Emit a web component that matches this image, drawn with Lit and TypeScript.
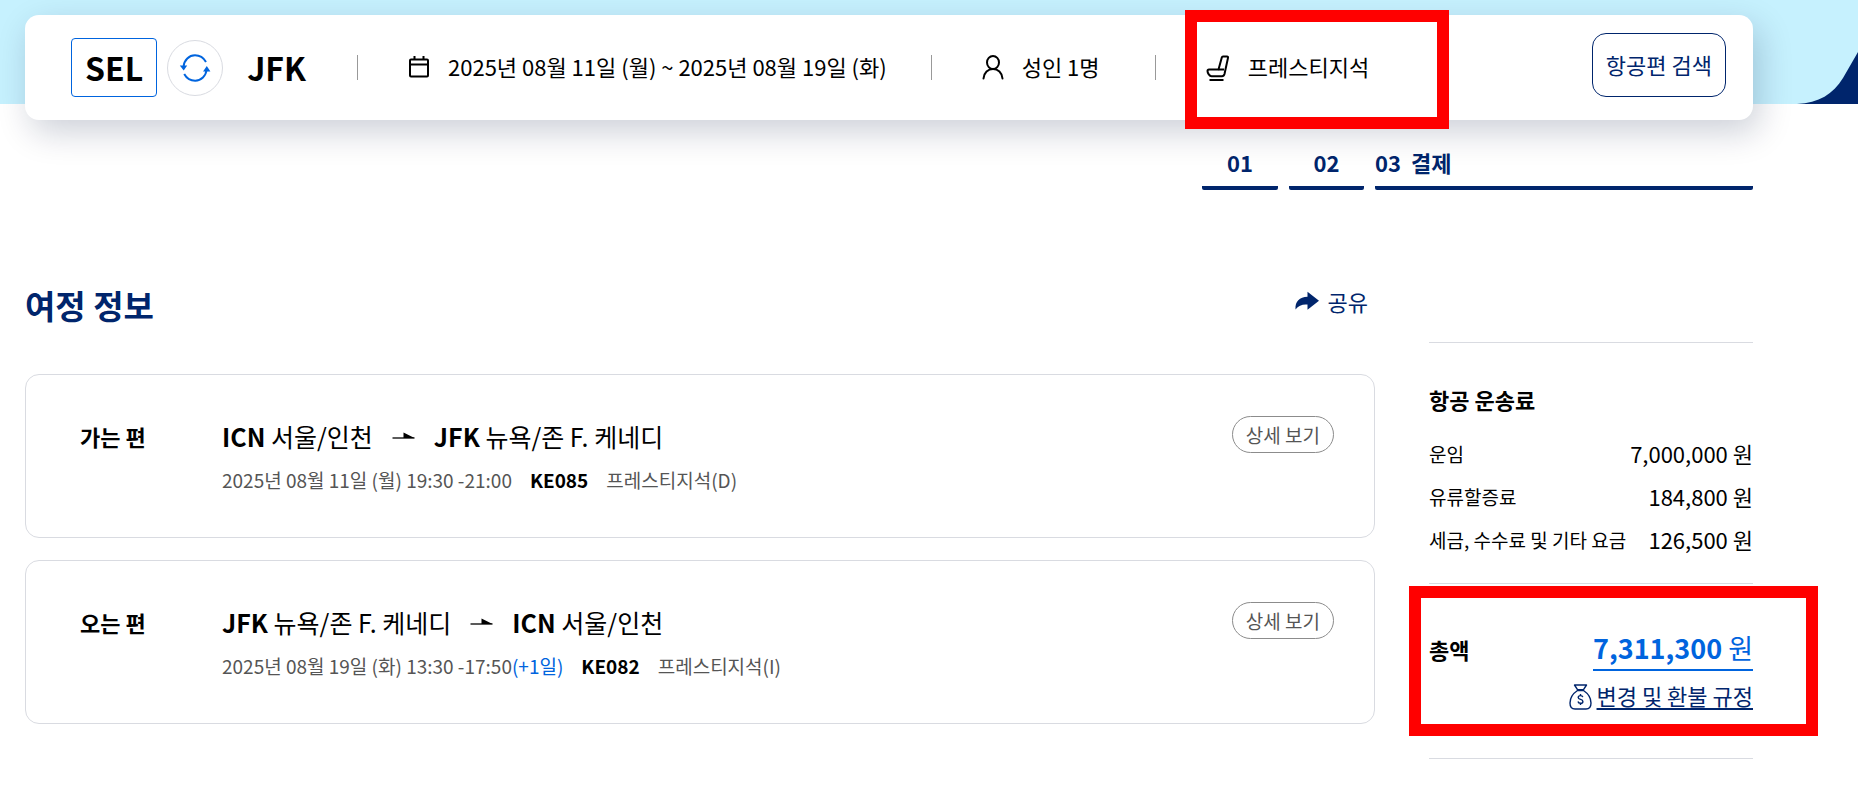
import { LitElement, html, css, nothing } from "lit";
import { customElement, property } from "lit/decorators.js";

const shared = css`
  * {
    box-sizing: border-box;
  }
  h2,
  h3,
  p,
  dl,
  dd,
  dt,
  ol {
    margin: 0;
    padding: 0;
  }
  button {
    font: inherit;
    color: inherit;
    background: none;
    border: 0;
    padding: 0;
    cursor: pointer;
    white-space: nowrap;
  }
  svg {
    display: block;
    flex: none;
  }
`;

const icons = {
  swap: html`<svg width="32" height="28" viewBox="0 0 32 28" fill="none" stroke="#0064de" stroke-width="2">
    <path d="M4.6 12.5C5.2 6 10 1.3 16 1.3c4.600 0 8.600 2.500 11 6.700" />
    <path d="M27.600 15.500C27 22 22.200 26.700 16.200 26.700c-4.700 0-8.700-2.600-11-6.700" />
    <path d="M.8 11.500h7.400l-3.500 5z" fill="#0064de" stroke="none" />
    <path d="M24 17.500h7.400l-3.600-5.500z" fill="#0064de" stroke="none" />
  </svg>`,
  calendar: html`<svg width="22" height="24" viewBox="0 0 22 24" fill="none" stroke="#000" stroke-width="2">
    <rect x="2" y="3.500" width="18" height="17" rx="1" />
    <path d="M2 8.500h18M6.500 0v4M15.500 0v4" />
  </svg>`,
  person: html`<svg width="22" height="26" viewBox="0 0 22 26" fill="none" stroke="#000" stroke-width="2" stroke-linecap="round">
    <ellipse cx="11" cy="7.500" rx="6" ry="6.500" />
    <path d="M1.500 23.500c.5-6 4.500-9.500 9.500-9.500s9 3.500 9.500 9.500" />
  </svg>`,
  seat: html`<svg width="24" height="28" viewBox="0 0 24 28" fill="none" stroke="#000" stroke-width="2" stroke-linejoin="round">
    <path d="M17 2.500h4c.8 0 1.200.6 1 1.400L18.500 20c-.4 1.500-1.200 2.200-2.500 2.200H5.500C3.500 22.200 1.500 19 1.500 17c0-1 .6-1.500 1.500-1.500h9.500L15.800 3.500c.2-.7.600-1 1.200-1z" />
    <path d="M12.500 15.500h5.500" />
    <path d="M3.500 26h14" />
  </svg>`,
  share: html`<svg width="24" height="20" viewBox="0 0 24 20" fill="#00256c">
    <path d="M12.500.8 24 9.800l-11.500 9V13.500C7.500 13 3.500 14.500.5 18.500 0 10.500 4.500 6 12.500 5.800z" />
  </svg>`,
  arrow: html`<svg width="23" height="12" viewBox="0 0 23 12">
    <path d="M11.500 2.500 22.500 8H11.500z" />
    <path d="M.5 8h22" stroke="#000" stroke-width="1.300" />
  </svg>`,
  bag: html`<svg width="23" height="26" viewBox="0 0 23 26" fill="none" stroke="#00256c" stroke-width="1.400" stroke-linejoin="round">
    <path d="M5.500 1h12l-3 4.700h-6z" />
    <path d="M8.500 6.500h6c4.500 3 7.500 7.500 7.500 12.500 0 4-1.500 6-5 6H6c-3.500 0-5-2-5-6 0-5 3-9.500 7.500-12.500z" />
    <path d="M13.800 13.200c-.2-1-1.100-1.600-2.300-1.600-1.400 0-2.300.7-2.300 1.800 0 2.700 4.700 1.300 4.700 4 0 1.100-1 1.900-2.400 1.900-1.300 0-2.300-.7-2.500-1.800M11.500 10v1.600M11.500 19.300v1.700" />
  </svg>`,
};

@customElement("search-bar")
class SearchBar extends LitElement {
  static styles = [
    shared,
    css`
      :host {
        display: block;
        position: relative;
        padding: 15px 105px 0 25px;
        background: linear-gradient(#c6f1fe, #c6f1fe) top / 100% 104px no-repeat;
      }
      .wave {
        position: absolute;
        top: 52px;
        right: 0;
      }
      .bar {
        position: relative;
        display: flex;
        align-items: center;
        min-height: 105px;
        padding: 18px 27px 18px 46px;
        border-radius: 14px;
        background: #fff;
        box-shadow: 6px 12px 34px rgba(0, 20, 60, 0.2);
      }
      .airport {
        font-size: 32px;
        line-height: 57px;
        font-weight: 700;
      }
      .origin {
        padding: 0 13px;
        border: 1px solid #0064de;
        border-radius: 4px;
      }
      .swap {
        display: grid;
        place-items: center;
        width: 56px;
        height: 56px;
        margin: 0 24px 0 10px;
        border: 1px solid #d9dbe1;
        border-radius: 50%;
      }
      .field {
        position: relative;
        display: flex;
        align-items: center;
        gap: 18px;
        min-width: 129px;
        margin-left: 50px;
      }
      .field span {
        padding-bottom: 3px;
      }
      .rule {
        width: 1px;
        height: 25px;
        margin-left: 44px;
        background: #999;
      }
      .airport + .rule {
        margin-left: 51px;
      }
      .marked::after {
        content: "";
        position: absolute;
        inset: -40px -80px -44px -21px;
        border: 12px solid #f00;
      }
      .search {
        align-self: flex-start;
        height: 64px;
        margin-left: auto;
        padding: 0 13px 3px;
        border: 1px solid #00256c;
        border-radius: 14px;
        color: #00256c;
      }
    `,
  ];
  render() {
    return html`
      <svg class="wave" width="61" height="52" viewBox="0 0 61 52" aria-hidden="true">
        <path d="M0 52C22 51 36 42 46 26L61 0v52z" fill="#00256c" />
      </svg>
      <div class="bar">
        <button class="airport origin">SEL</button>
        <button class="swap" aria-label="출발지 도착지 변경">${icons.swap}</button>
        <button class="airport">JFK</button>
        <span class="rule"></span>
        <button class="field">${icons.calendar}<span>2025년 08월 11일 (월) ~ 2025년 08월 19일 (화)</span></button>
        <span class="rule"></span>
        <button class="field">${icons.person}<span>성인 1명</span></button>
        <span class="rule"></span>
        <button class="field marked">${icons.seat}<span>프레스티지석</span></button>
        <button class="search">항공편 검색</button>
      </div>
    `;
  }
}

@customElement("step-list")
class StepList extends LitElement {
  static styles = [
    shared,
    css`
      :host {
        display: flex;
        justify-content: flex-end;
        padding: 26px 105px 0 25px;
      }
      ol {
        display: grid;
        grid-template-columns: 76px 75px 378px;
        gap: 11px;
        list-style: none;
        color: #00256c;
        font-weight: 700;
        line-height: 32px;
      }
      li {
        display: flex;
        justify-content: center;
        gap: 10px;
        padding-bottom: 12px;
        background: linear-gradient(#00256c, #00256c) bottom / 100% 4px no-repeat;
        border-radius: 2px;
      }
      .current {
        justify-content: flex-start;
      }
    `,
  ];
  render() {
    return html`<ol>
      <li>01</li>
      <li>02</li>
      <li class="current" aria-current="step"><span>03</span><span>결제</span></li>
    </ol>`;
  }
}

interface Stop {
  code: string;
  city: string;
}
interface Flight {
  label: string;
  from: Stop;
  to: Stop;
  time: string;
  plus?: string;
  no: string;
  cabin: string;
}

const ICN: Stop = { code: "ICN", city: "서울/인천" };
const JFK: Stop = { code: "JFK", city: "뉴욕/존 F. 케네디" };
const flights: Flight[] = [
  { label: "가는 편", from: ICN, to: JFK, time: "2025년 08월 11일 (월) 19:30 -21:00", no: "KE085", cabin: "프레스티지석(D)" },
  { label: "오는 편", from: JFK, to: ICN, time: "2025년 08월 19일 (화) 13:30 -17:50", plus: "(+1일)", no: "KE082", cabin: "프레스티지석(I)" },
];

@customElement("flight-card")
class FlightCard extends LitElement {
  @property({ attribute: false }) flight!: Flight;
  static styles = [
    shared,
    css`
      :host {
        display: grid;
        grid-template-columns: 142px 1fr auto;
        align-items: start;
        min-height: 164px;
        padding: 41px 40px 36px 54px;
        border: 1px solid #d9dbe1;
        border-radius: 14px;
      }
      h3 {
        font-size: 22px;
        line-height: 40px;
      }
      .route {
        display: flex;
        align-items: center;
        gap: 19px;
        font-size: 25px;
        line-height: 40px;
      }
      .meta {
        display: flex;
        gap: 18px;
        margin-top: 6px;
        font-size: 19px;
        line-height: 36px;
        color: #555;
      }
      .no {
        color: #000;
      }
      .plus {
        color: #0064de;
      }
      .detail {
        height: 37px;
        padding: 0 13px;
        border: 1px solid #8c8c8c;
        border-radius: 19px;
        font-size: 19px;
        line-height: 35px;
        color: #555;
      }
    `,
  ];
  render() {
    const f = this.flight;
    return html`
      <h3>${f.label}</h3>
      <div>
        <p class="route">
          <span><b>${f.from.code}</b> ${f.from.city}</span>
          ${icons.arrow}
          <span><b>${f.to.code}</b> ${f.to.city}</span>
        </p>
        <p class="meta">
          <span>${f.time}${f.plus ? html`<span class="plus">${f.plus}</span>` : nothing}</span>
          <b class="no">${f.no}</b>
          <span>${f.cabin}</span>
        </p>
      </div>
      <button class="detail">상세 보기</button>
    `;
  }
}

@customElement("fare-summary")
class FareSummary extends LitElement {
  static styles = [
    shared,
    css`
      :host {
        display: block;
      }
      .fares,
      .total {
        border-top: 1px solid #d9dbe1;
      }
      .fares {
        padding: 36px 0 22px;
      }
      .total {
        padding: 42px 0 48px;
        border-bottom: 1px solid #d9dbe1;
      }
      h3 {
        font-size: 22px;
        line-height: 40px;
      }
      dl {
        padding-top: 13px;
      }
      .row {
        display: flex;
        justify-content: space-between;
        align-items: center;
        line-height: 43px;
      }
      dt {
        font-size: 19px;
      }
      .box {
        position: relative;
      }
      .box::after {
        content: "";
        position: absolute;
        inset: -40px -65px -26px -20px;
        border: 12px solid #f00;
        pointer-events: none;
      }
      .amount {
        font-size: 27px;
        line-height: 43px;
        color: #0064de;
        border-bottom: 2px solid #0064de;
      }
      .rules {
        display: flex;
        justify-content: flex-end;
        align-items: flex-end;
        gap: 5px;
        margin-top: 9px;
        line-height: 30px;
      }
      a {
        color: #00256c;
        text-decoration-thickness: 2px;
        text-underline-offset: 3px;
      }
    `,
  ];
  render() {
    return html`
      <section class="fares">
        <h3>항공 운송료</h3>
        <dl>
          <div class="row"><dt>운임</dt><dd>7,000,000 원</dd></div>
          <div class="row"><dt>유류할증료</dt><dd>184,800 원</dd></div>
          <div class="row"><dt>세금, 수수료 및 기타 요금</dt><dd>126,500 원</dd></div>
        </dl>
      </section>
      <section class="total">
        <div class="box">
          <div class="row">
            <h3>총액</h3>
            <button class="amount"><b>7,311,300</b> 원</button>
          </div>
          <div class="rules">${icons.bag}<a href="#rules">변경 및 환불 규정</a></div>
        </div>
      </section>
    `;
  }
}

@customElement("app-root")
class AppRoot extends LitElement {
  static styles = [
    shared,
    css`
      :host {
        display: block;
        font: 22px/32px "Noto Sans CJK KR", "Noto Sans", sans-serif;
        color: #000;
        background: #fff;
      }
      main {
        display: grid;
        grid-template-columns: minmax(0, 1fr) 324px;
        gap: 54px;
        padding: 91px 105px 40px 25px;
      }
      .head {
        display: flex;
        justify-content: space-between;
        align-items: flex-start;
        min-height: 93px;
        padding-right: 7px;
        color: #00256c;
      }
      h2 {
        font-size: 33px;
        line-height: 48px;
      }
      .share {
        display: flex;
        align-items: center;
        gap: 9px;
        height: 40px;
      }
      .cards {
        display: grid;
        gap: 22px;
      }
      fare-summary {
        padding-top: 61px;
      }
    `,
  ];
  render() {
    return html`
      <search-bar></search-bar>
      <step-list></step-list>
      <main>
        <section>
          <div class="head">
            <h2>여정 정보</h2>
            <button class="share">${icons.share}<span>공유</span></button>
          </div>
          <div class="cards">${flights.map((f) => html`<flight-card .flight=${f}></flight-card>`)}</div>
        </section>
        <fare-summary></fare-summary>
      </main>
    `;
  }
}
